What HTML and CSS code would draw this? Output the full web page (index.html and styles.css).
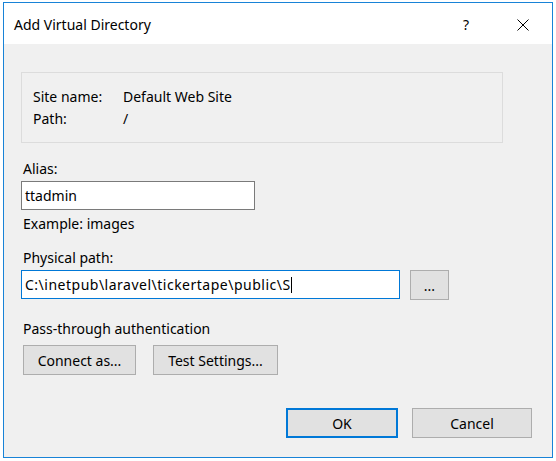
FILE: index.html
```html
<!DOCTYPE html>
<html>
<head>
    <meta charset="utf-8">
    <title>Add Virtual Directory</title>
    <link rel="stylesheet" href="styles.css">
</head>
<body>
    <div class="window">
        <div class="titlebar">
            <span class="title">Add Virtual Directory</span>
            <span class="help">?</span>
            <span class="close">
                <svg width="12" height="12" viewBox="0 0 12 12"><path d="M0.5 0.5 L11.5 11.5 M11.5 0.5 L0.5 11.5" stroke="#000" stroke-width="1" fill="none" /></svg>
            </span>
        </div>
        <div class="content">
            <div class="groupbox">
                <span class="key">Site name:</span><span>Default Web Site</span>
                <span class="key">Path:</span><span>/</span>
            </div>

            <div class="label">Alias:</div>
            <div class="textbox alias">ttadmin</div>
            <div class="hint">Example: images</div>

            <div class="label phys">Physical path:</div>
            <div class="row">
                <div class="textbox path focused">C:\inetpub\laravel\tickertape\public\S<span class="caret"></span></div>
                <button class="btn browse">...</button>
            </div>

            <div class="label pass">Pass-through authentication</div>
            <div class="row">
                <button class="btn connect">Connect as...</button>
                <button class="btn test">Test Settings...</button>
            </div>

            <div class="footer">
                <button class="btn ok">OK</button>
                <button class="btn cancel">Cancel</button>
            </div>
        </div>
    </div>
</body>
</html>
```

FILE: styles.css
```css
body {
    margin: 0;
    padding: 0;
    background: #fff;
    font-family: "Noto Sans", "Open Sans", sans-serif;
    font-size: 14px;
    color: #000;
}

.window {
    margin: 2px 0 0 3px;
    width: 548px;
    height: 454px;
    border: 1px solid #1883d7;
    display: flex;
    flex-direction: column;
}

.titlebar {
    height: 39px;
    padding-top: 2px;
    background: #fff;
    display: flex;
    align-items: center;
    padding-left: 10px;
}

.title {
    flex: 1;
}

.help {
    width: 12px;
    margin-right: 42px;
}

.close {
    width: 12px;
    height: 12px;
    margin-right: 23px;
    display: flex;
}

.content {
    flex: 1;
    background: #f0f0f0;
    padding: 28px 0 0 17px;
}

.groupbox {
    width: 469px;
    height: 56px;
    border: 1px solid #dcdcdc;
    display: grid;
    grid-template-columns: 90px 1fr;
    grid-auto-rows: 22px;
    padding: 13px 0 0 11px;
    line-height: 22px;
}

.label {
    margin: 17px 0 0 2px;
    line-height: 18px;
}

.textbox {
    background: #fff;
    border: 1px solid #7a7a7a;
    height: 27px;
    line-height: 27px;
    padding-left: 3px;
    box-sizing: border-box;
    margin-top: 3px;
}

.alias {
    width: 234px;
    height: 29px;
    line-height: 27px;
}

.hint {
    margin: 5px 0 0 2px;
    line-height: 18px;
}

.label.phys {
    margin-top: 16px;
}

.row {
    display: flex;
    gap: 10px;
    align-items: flex-start;
}

.path {
    width: 379px;
    height: 29px;
    border-color: #0078d7;
    letter-spacing: 0.5px;
}

.caret {
    display: inline-block;
    width: 1px;
    height: 16px;
    background: #000;
    vertical-align: -3px;
}

.btn {
    font: inherit;
    background: #e1e1e1;
    border: 1px solid #adadad;
    height: 30px;
    padding: 0;
    color: #000;
}

.browse {
    width: 39px;
    margin-top: 3px;
}

.label.pass {
    margin-top: 20px;
}

.row .connect {
    width: 113px;
    margin: 7px 0 0 2px;
}

.row .test {
    width: 125px;
    margin-top: 7px;
    margin-left: 7px;
}

.footer {
    display: flex;
    gap: 14px;
    margin: 33px 0 0 265px;
}

.ok {
    width: 112px;
    border: 2px solid #0078d7;
}

.cancel {
    width: 120px;
}
```
